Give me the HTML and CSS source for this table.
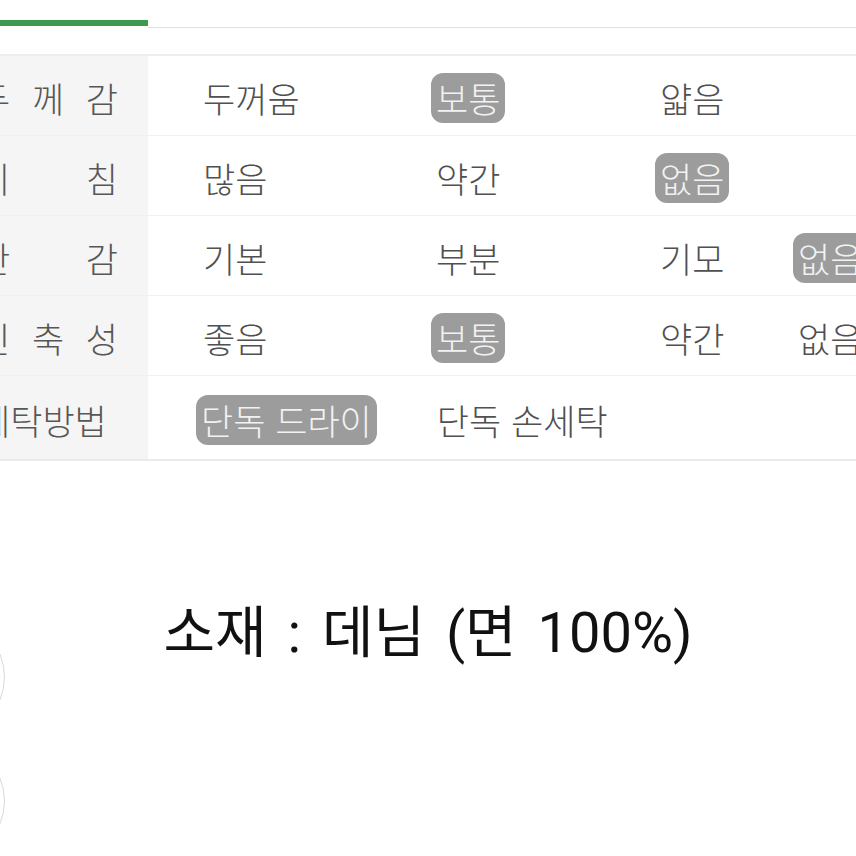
FILE: index.html
```html
<!DOCTYPE html>
<html lang="ko">
<head>
<meta charset="utf-8">
<link rel="stylesheet" href="styles.css">
</head>
<body>
<div class="tabs">
  <div class="tab-active"></div>
  <div class="tab-rest"></div>
</div>

<div class="spec">
  <div class="row">
    <div class="label"><span>두 께 감</span></div>
    <div class="values">
      <span class="val">두꺼움</span>
      <span class="val on">보통</span>
      <span class="val">얇음</span>
    </div>
  </div>
  <div class="row">
    <div class="label"><span>비 침</span></div>
    <div class="values">
      <span class="val">많음</span>
      <span class="val">약간</span>
      <span class="val on">없음</span>
    </div>
  </div>
  <div class="row">
    <div class="label"><span>안 감</span></div>
    <div class="values">
      <span class="val">기본</span>
      <span class="val">부분</span>
      <span class="val">기모</span>
      <span class="val on">없음</span>
    </div>
  </div>
  <div class="row">
    <div class="label"><span>신 축 성</span></div>
    <div class="values">
      <span class="val">좋음</span>
      <span class="val on">보통</span>
      <span class="val">약간</span>
      <span class="val">없음</span>
    </div>
  </div>
  <div class="row last">
    <div class="label"><span>세탁방법</span></div>
    <div class="values flow">
      <span class="val on">단독 드라이</span>
      <span class="val">단독 손세탁</span>
    </div>
  </div>
</div>

<div class="material">
  <p class="material-text">소재 : 데님 (면 100%)</p>
  <div class="circles">
    <span class="circle"></span>
    <span class="circle"></span>
  </div>
</div>
</body>
</html>
```

FILE: styles.css
```css
html, body {
  margin: 0;
  padding: 0;
  background: #ffffff;
}
body {
  width: 856px;
  height: 856px;
  overflow: hidden;
  font-family: "Noto Sans CJK KR", "Noto Sans", sans-serif;
}

.tabs {
  display: flex;
  align-items: flex-start;
  padding-top: 20px;
}
.tab-active {
  width: 148px;
  height: 6px;
  background: #3d9a50;
}
.tab-rest {
  flex: 1;
  height: 7px;
  border-bottom: 1px solid #e0e0e0;
}

.spec {
  margin-top: 26px;
  border-top: 2px solid #eeeeee;
  border-bottom: 2px solid #ebebeb;
}
.row {
  display: grid;
  grid-template-columns: 148px 1fr;
  height: 80px;
  box-sizing: border-box;
  border-bottom: 1px solid #f0f0f0;
}
.row.last {
  height: 83px;
  border-bottom: none;
}
.label {
  background: #f5f5f5;
  display: flex;
  align-items: center;
  justify-content: flex-end;
  padding-right: 30px;
  font-size: 35px;
  font-weight: 300;
  color: #575757;
}
.label span {
  flex: none;
  width: 140px;
  text-align: justify;
  text-align-last: justify;
  line-height: 1;
  white-space: nowrap;
  padding-top: 4px;
}
.values {
  display: grid;
  grid-template-columns: 233px 224px 138px 1fr;
  align-items: center;
  padding-left: 50px;
  font-size: 35px;
  font-weight: 300;
  color: #505050;
}
.values.flow {
  display: flex;
  gap: 55px;
  padding-left: 48px;
}
.val {
  justify-self: start;
  padding: 0 5px;
  margin-top: 4px;
  line-height: 50px;
  height: 50px;
  white-space: nowrap;
}
.val.on {
  background: #9c9c9c;
  color: #f2f2f2;
  border-radius: 12px;
}

.material {
  position: relative;
  height: 394px;
}
.material-text {
  margin: 0;
  padding-top: 140px;
  text-align: center;
  font-family: Roboto, "Noto Sans CJK KR", sans-serif;
  font-size: 56px;
  line-height: 64px;
  color: #111111;
  word-spacing: 7px;
}
.circles {
  position: absolute;
  left: -115px;
  top: 156px;
  display: flex;
  flex-direction: column;
  gap: 4px;
}
.circle {
  display: block;
  width: 120px;
  height: 120px;
  border-radius: 50%;
  border: 1.5px solid #d9d9d9;
  box-sizing: border-box;
}
```
